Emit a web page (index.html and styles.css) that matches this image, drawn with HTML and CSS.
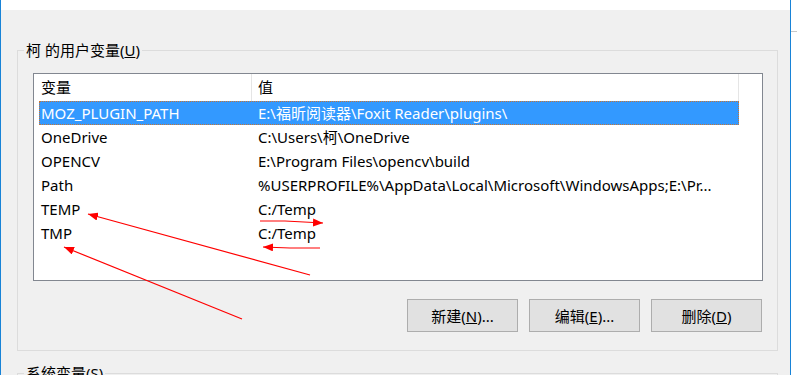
FILE: index.html
```html
<!DOCTYPE html>
<html lang="zh-CN">
<head>
    <meta charset="UTF-8">
    <title>环境变量</title>
    <link rel="stylesheet" href="styles.css">
</head>
<body>
    <div class="window">
        <div class="titlebar"></div>

        <fieldset class="group">
            <legend>柯 的用户变量(<u>U</u>)</legend>
            <div class="group-body">
                <div class="listview">
                    <div class="list-header">
                        <div class="hcell col-name">变量</div>
                        <div class="hcell col-value">值</div>
                    </div>
                    <div class="list-row selected">
                        <span class="cell-name">MOZ_PLUGIN_PATH</span>
                        <span class="cell-value">E:\福昕阅读器\Foxit Reader\plugins\</span>
                    </div>
                    <div class="list-row">
                        <span class="cell-name">OneDrive</span>
                        <span class="cell-value">C:\Users\柯\OneDrive</span>
                    </div>
                    <div class="list-row">
                        <span class="cell-name">OPENCV</span>
                        <span class="cell-value">E:\Program Files\opencv\build</span>
                    </div>
                    <div class="list-row">
                        <span class="cell-name">Path</span>
                        <span class="cell-value">%USERPROFILE%\AppData\Local\Microsoft\WindowsApps;E:\Pr...</span>
                    </div>
                    <div class="list-row">
                        <span class="cell-name">TEMP</span>
                        <span class="cell-value">C:/Temp</span>
                    </div>
                    <div class="list-row">
                        <span class="cell-name">TMP</span>
                        <span class="cell-value">C:/Temp</span>
                    </div>
                </div>

                <div class="buttons">
                    <button>新建(<u>N</u>)...</button>
                    <button>编辑(<u>E</u>)...</button>
                    <button>删除(<u>D</u>)</button>
                </div>
            </div>
        </fieldset>

        <fieldset class="group">
            <legend>系统变量(<u>S</u>)</legend>
            <div class="group-body"></div>
        </fieldset>
    </div>

    <div class="outside">
        <div class="outside-line"></div>
    </div>

    <!-- red annotation arrows drawn over the screenshot -->
    <svg class="annotations" width="797" height="375" viewBox="0 0 797 375">
        <defs>
            <marker id="head" viewBox="0 0 10 8" refX="10" refY="4" markerWidth="10" markerHeight="8" markerUnits="userSpaceOnUse" orient="auto">
                <path d="M0 0 L10 4 L0 8 Z" fill="#ff0000"/>
            </marker>
        </defs>
        <line x1="310" y1="275" x2="88" y2="214" stroke="#ff0000" stroke-width="1.2" marker-end="url(#head)"/>
        <line x1="242" y1="319" x2="64" y2="247" stroke="#ff0000" stroke-width="1.2" marker-end="url(#head)"/>
        <polyline points="260,221 285,221 323,223" fill="none" stroke="#ff0000" stroke-width="1.2" marker-end="url(#head)"/>
        <polyline points="320,248 290,248 263,247" fill="none" stroke="#ff0000" stroke-width="1.2" marker-end="url(#head)"/>
    </svg>
</body>
</html>
```

FILE: styles.css
```css
body {
    margin: 0;
    width: 797px;
    height: 375px;
    overflow: hidden;
    display: flex;
    background-color: #ffffff;
    font-family: "Noto Sans", "Noto Sans CJK SC", sans-serif;
    font-size: 15px;
    color: #000000;
}
.window {
    width: 791px;
    height: 375px;
    box-sizing: border-box;
    border-left: 1px solid #1883d7;
    border-right: 1px solid #1883d7;
    background-color: #f0f0f0;
    overflow: hidden;
}
.titlebar {
    height: 10px;
    background-color: #ffffff;
}
.outside {
    flex: 1;
    background-color: #ffffff;
    padding-top: 31px;
}
.outside-line {
    height: 1px;
    background-color: #c8c8c8;
}
.group {
    width: 761px;
    box-sizing: border-box;
    margin: 30px 0 0 16px;
    padding: 0;
    border: 1px solid #dcdcdc;
    min-width: 0;
}
.group + .group {
    margin-top: 12px;
}
.group legend {
    margin-left: 6px;
    padding: 0 2px;
    line-height: 20px;
}
.group-body {
    padding: 13px 14px 18px 15px;
}
.listview {
    width: 730px;
    height: 208px;
    box-sizing: border-box;
    border: 1px solid #828790;
    background-color: #ffffff;
}
.list-header {
    display: flex;
    height: 27px;
}
.hcell {
    box-sizing: border-box;
    line-height: 27px;
    border-right: 1px solid #e5e5e5;
}
.col-name {
    width: 218px;
    padding-left: 7px;
}
.col-value {
    width: 487px;
    padding-left: 6px;
}
.list-row {
    display: grid;
    grid-template-columns: 212px 1fr;
    width: 700px;
    height: 24px;
    box-sizing: border-box;
    margin-left: 5px;
    border: 1px dotted transparent;
    line-height: 22px;
    white-space: nowrap;
}
.list-row.selected {
    background-color: #3399ff;
    border-color: #c87533;
    color: #ffffff;
}
.cell-name {
    padding-left: 1px;
}
.cell-value {
    padding-left: 6px;
    overflow: hidden;
}
.buttons {
    display: flex;
    justify-content: flex-end;
    gap: 11px;
    margin-top: 18px;
    padding-right: 1px;
}
.buttons button {
    width: 111px;
    height: 33px;
    background-color: #e1e1e1;
    border: 1px solid #adadad;
    border-radius: 0;
    font-family: inherit;
    font-size: 15px;
    color: #000000;
    padding: 0;
}
.annotations {
    position: absolute;
    top: 0;
    left: 0;
    pointer-events: none;
}
```
